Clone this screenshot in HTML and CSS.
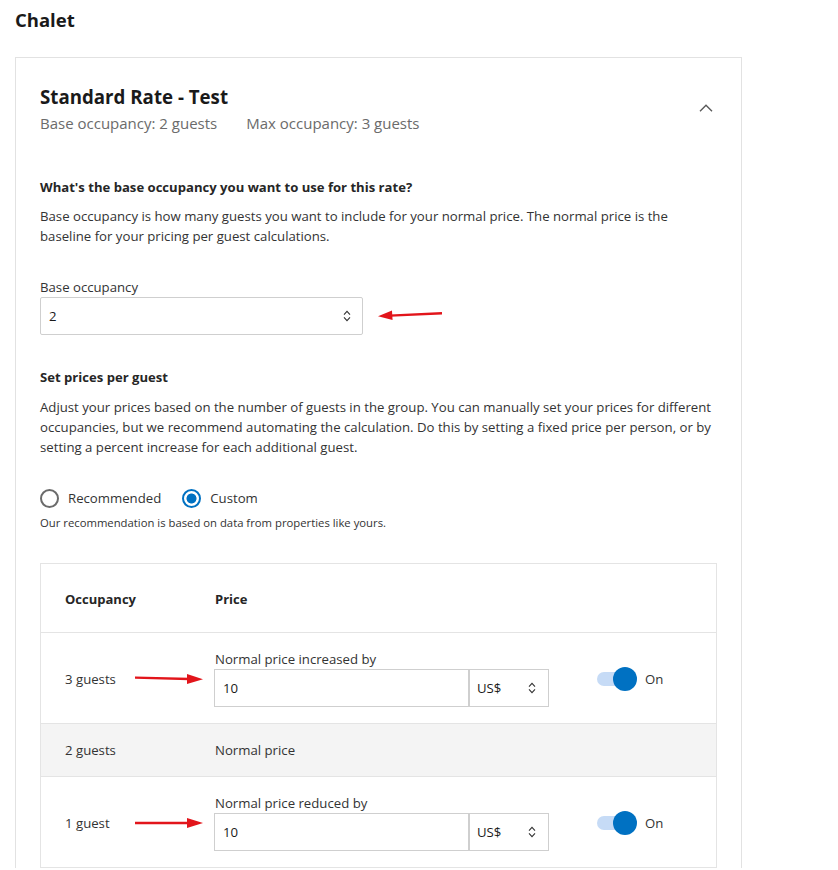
FILE: index.html
```html
<!DOCTYPE html>
<html lang="en">
<head>
<meta charset="utf-8">
<title>Chalet – Standard Rate</title>
<link rel="stylesheet" href="styles.css">
</head>
<body>
<div class="page">
  <h1 class="property">Chalet</h1>

  <section class="rate-card">
    <header class="rate-head">
      <div>
        <h2 class="rate-title">Standard Rate - Test</h2>
        <div class="rate-meta">
          <span>Base occupancy: 2 guests</span>
          <span>Max occupancy: 3 guests</span>
        </div>
      </div>
      <button class="collapse" type="button" aria-label="Collapse">
        <svg width="14" height="8" viewBox="0 0 14 8"><polyline points="1,7.2 7,1.2 13,7.2" fill="none" stroke="#595959" stroke-width="1.4"/></svg>
      </button>
    </header>

    <div class="block first">
      <h3 class="block-title">What's the base occupancy you want to use for this rate?</h3>
      <p class="block-text">Base occupancy is how many guests you want to include for your normal price. The normal price is the baseline for your pricing per guest calculations.</p>
      <div class="field-label">Base occupancy</div>
      <div class="field-row">
        <div class="select base-select">
          <span>2</span>
          <svg class="updown" width="8" height="12" viewBox="0 0 8 12"><polyline points="1,4.6 4,1.4 7,4.6" fill="none" stroke="#333" stroke-width="1.1"/><polyline points="1,7.4 4,10.6 7,7.4" fill="none" stroke="#333" stroke-width="1.1"/></svg>
        </div>
        <svg class="note-arrow left" width="66" height="10" viewBox="0 0 66 10"><line x1="12" y1="5.6" x2="64" y2="3.2" stroke="#e2151b" stroke-width="2.4"/><polygon points="0,6.2 14,0.6 14.6,10" fill="#e2151b"/></svg>
      </div>
    </div>

    <div class="block second">
      <h3 class="block-title">Set prices per guest</h3>
      <p class="block-text">Adjust your prices based on the number of guests in the group. You can manually set your prices for different occupancies, but we recommend automating the calculation. Do this by setting a fixed price per person, or by setting a percent increase for each additional guest.</p>
      <div class="radios">
        <label class="radio"><span class="dot"></span>Recommended</label>
        <label class="radio checked"><span class="dot"></span>Custom</label>
      </div>
      <div class="hint">Our recommendation is based on data from properties like yours.</div>

      <div class="price-table">
        <div class="pt-row pt-head">
          <div class="cell-occ">Occupancy</div>
          <div class="cell-price">Price</div>
        </div>

        <div class="pt-row">
          <div class="cell-occ">3 guests
            <svg class="note-arrow right" width="68" height="10" viewBox="0 0 68 10"><line x1="0" y1="3.6" x2="54" y2="5" stroke="#e2151b" stroke-width="2.4"/><polygon points="52,0 68,5.2 52,10" fill="#e2151b"/></svg>
          </div>
          <div class="cell-price">
            <div class="field-label small">Normal price increased by</div>
            <div class="amount">
              <div class="amount-input">10</div>
              <div class="select currency"><span>US$</span>
                <svg class="updown" width="8" height="12" viewBox="0 0 8 12"><polyline points="1,4.6 4,1.4 7,4.6" fill="none" stroke="#333" stroke-width="1.1"/><polyline points="1,7.4 4,10.6 7,7.4" fill="none" stroke="#333" stroke-width="1.1"/></svg>
              </div>
            </div>
          </div>
          <div class="cell-toggle">
            <span class="toggle"><span class="knob"></span></span>On
          </div>
        </div>

        <div class="pt-row base-row">
          <div class="cell-occ">2 guests</div>
          <div class="cell-price">Normal price</div>
        </div>

        <div class="pt-row">
          <div class="cell-occ">1 guest
            <svg class="note-arrow right" width="68" height="10" viewBox="0 0 68 10"><line x1="0" y1="5" x2="54" y2="5" stroke="#e2151b" stroke-width="2.4"/><polygon points="52,0 68,5 52,10" fill="#e2151b"/></svg>
          </div>
          <div class="cell-price">
            <div class="field-label small">Normal price reduced by</div>
            <div class="amount">
              <div class="amount-input">10</div>
              <div class="select currency"><span>US$</span>
                <svg class="updown" width="8" height="12" viewBox="0 0 8 12"><polyline points="1,4.6 4,1.4 7,4.6" fill="none" stroke="#333" stroke-width="1.1"/><polyline points="1,7.4 4,10.6 7,7.4" fill="none" stroke="#333" stroke-width="1.1"/></svg>
              </div>
            </div>
          </div>
          <div class="cell-toggle">
            <span class="toggle"><span class="knob"></span></span>On
          </div>
        </div>
      </div>
    </div>
  </section>
</div>
</body>
</html>
```

FILE: styles.css
```css
* { box-sizing: border-box; }

body {
  margin: 0;
  background: #fff;
  color: #262626;
  font-family: "Open Sans", "Noto Sans", sans-serif;
  font-size: 13.2px;
}

.page {
  padding: 8px 96px 0 15px;
}

.property {
  margin: 0;
  font-size: 18.5px;
  line-height: 24px;
  font-weight: 700;
  color: #1a1a1a;
}

.rate-card {
  margin-top: 25px;
  border: 1px solid #e2e2e2;
  border-bottom: none;
  padding: 27px 24px 0 24px;
}

.rate-head {
  display: flex;
  justify-content: space-between;
  align-items: flex-start;
}

.rate-title {
  margin: 0;
  font-size: 18.7px;
  line-height: 24px;
  font-weight: 700;
  color: #1a1a1a;
}

.rate-meta {
  margin-top: 4px;
  display: flex;
  gap: 29px;
  font-size: 15px;
  line-height: 20px;
  color: #6b6b6b;
}

.collapse {
  margin: 19px 4px 0 0;
  padding: 0;
  border: none;
  background: none;
  display: flex;
}

.block.first { margin-top: 44px; }
.block.second { margin-top: 32px; }

.block-title {
  margin: 0;
  font-size: 13.1px;
  line-height: 20px;
  font-weight: 700;
  color: #262626;
}

.block-text {
  margin: 9px 0 0 0;
  line-height: 20px;
  color: #333;
}

.second .block-text { margin-top: 10px; }

.field-label {
  margin-top: 31px;
  line-height: 20px;
  color: #333;
}

.field-label.small {
  margin-top: 0;
  line-height: 19px;
}

.field-row {
  display: flex;
  align-items: center;
}

.select {
  display: flex;
  align-items: center;
  justify-content: space-between;
  height: 38px;
  border: 1px solid #cfcfcf;
  border-radius: 2px;
  color: #1a1a1a;
}

.base-select {
  width: 323px;
  padding: 0 11px 0 8px;
}

.updown { display: block; }

.note-arrow { display: block; }
.note-arrow.left { margin-left: 15px; margin-top: -2px; }

.radios {
  margin-top: 31px;
  display: flex;
  gap: 21px;
  line-height: 20px;
}

.radio {
  display: flex;
  align-items: center;
  gap: 9px;
  color: #333;
}

.dot {
  width: 19px;
  height: 19px;
  border-radius: 50%;
  border: 2px solid #6b6b6b;
  display: inline-block;
}

.radio.checked .dot {
  border-color: #0071c2;
  background: radial-gradient(circle, #0071c2 0 4.6px, #fff 5.4px);
}

.hint {
  margin-top: 7px;
  font-size: 11.3px;
  line-height: 16px;
  color: #333;
}

.price-table {
  margin-top: 32px;
  border: 1px solid #e4e4e4;
}

.pt-row {
  display: grid;
  grid-template-columns: 149px 335px 1fr;
  align-items: center;
  padding: 17px 0 16px 24px;
  border-top: 1px solid #e4e4e4;
  line-height: 20px;
  color: #333;
}

.pt-row.pt-head {
  border-top: none;
  padding-top: 25px;
  padding-bottom: 23px;
  font-weight: 700;
  font-size: 13px;
  color: #262626;
}

.pt-row.base-row {
  background: #f4f4f4;
  padding-top: 16px;
  padding-bottom: 16px;
}

.cell-occ {
  position: relative;
  align-self: stretch;
  display: flex;
  align-items: center;
}

.cell-occ .note-arrow {
  position: absolute;
  left: 70px;
  top: 50%;
  transform: translateY(-50%);
}

.cell-price { padding-left: 1px; }

.amount {
  display: flex;
  margin-left: -1px;
  height: 38px;
}

.amount-input {
  width: 255px;
  border: 1px solid #cfcfcf;
  display: flex;
  align-items: center;
  padding-left: 8px;
  color: #1a1a1a;
}

.currency {
  width: 80px;
  height: 38px;
  border-radius: 0;
  padding: 0 12px 0 7px;
}

.cell-toggle {
  padding-left: 48px;
  display: flex;
  align-items: center;
  gap: 8px;
  color: #333;
}

.toggle {
  position: relative;
  width: 40px;
  height: 24px;
  display: inline-block;
}

.toggle::before {
  content: "";
  position: absolute;
  left: 0;
  top: 5px;
  width: 33px;
  height: 14px;
  border-radius: 7px;
  background: #c6dbf6;
}

.knob {
  position: absolute;
  left: 16px;
  top: 0;
  width: 24px;
  height: 24px;
  border-radius: 50%;
  background: #0071c2;
}
```
